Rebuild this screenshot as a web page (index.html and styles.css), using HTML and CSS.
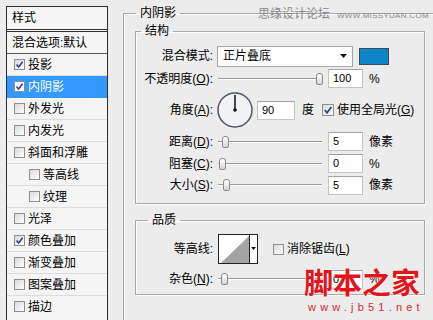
FILE: index.html
```html
<!DOCTYPE html>
<html lang="zh-CN">
<head>
<meta charset="utf-8">
<title>图层样式 - 内阴影</title>
<link rel="stylesheet" href="styles.css">
</head>
<body>
<div class="app">
  <aside class="styles-panel">
    <div class="sp-header">样式</div>
    <div class="sp-row sp-blend">混合选项:默认</div>
    <div class="sp-row"><span class="cb"><svg width="9" height="9" viewBox="0 0 9 9"><polyline points="1.5,4.5 3.6,7 7.6,1.8" fill="none" stroke="#2b3f96" stroke-width="1.6"/></svg></span>投影</div>
    <div class="sp-row selected"><span class="cb"><svg width="9" height="9" viewBox="0 0 9 9"><polyline points="1.5,4.5 3.6,7 7.6,1.8" fill="none" stroke="#2b3f96" stroke-width="1.6"/></svg></span>内阴影</div>
    <div class="sp-row"><span class="cb"></span>外发光</div>
    <div class="sp-row"><span class="cb"></span>内发光</div>
    <div class="sp-row"><span class="cb"></span>斜面和浮雕</div>
    <div class="sp-row sub"><span class="cb"></span>等高线</div>
    <div class="sp-row sub"><span class="cb"></span>纹理</div>
    <div class="sp-row"><span class="cb"></span>光泽</div>
    <div class="sp-row"><span class="cb"><svg width="9" height="9" viewBox="0 0 9 9"><polyline points="1.5,4.5 3.6,7 7.6,1.8" fill="none" stroke="#2b3f96" stroke-width="1.6"/></svg></span>颜色叠加</div>
    <div class="sp-row"><span class="cb"></span>渐变叠加</div>
    <div class="sp-row"><span class="cb"></span>图案叠加</div>
    <div class="sp-row last"><span class="cb"></span>描边</div>
  </aside>

  <main class="main">
    <fieldset class="group outer">
      <legend>内阴影</legend>

      <fieldset class="group struct">
        <legend>结构</legend>
        <div class="form struct-form">
          <div class="lbl">混合模式:</div>
          <div class="ctl">
            <div class="select"><span>正片叠底</span><svg class="arrow" width="7" height="4" viewBox="0 0 7 4"><polygon points="0,0 7,0 3.5,4" fill="#111"/></svg></div>
            <div class="swatch"></div>
          </div>

          <div class="lbl">不透明度(<u>O</u>):</div>
          <div class="ctl">
            <div class="slider"><div class="thumb" style="left:98px"></div></div>
            <div class="num">100</div>
            <span class="unit">%</span>
          </div>

          <div class="lbl">角度(<u>A</u>):</div>
          <div class="ctl">
            <svg class="dial" width="36" height="36" viewBox="0 0 36 36">
              <circle cx="18" cy="18" r="17" fill="#f1f2f5" stroke="#4f5668" stroke-width="1.5"/>
              <line x1="18" y1="18" x2="18" y2="3" stroke="#111" stroke-width="1.5"/>
              <circle cx="18" cy="18" r="1.8" fill="#111"/>
            </svg>
            <div class="num wide">90</div>
            <span class="deg">度</span>
            <span class="cb big"><svg width="10" height="10" viewBox="0 0 10 10"><polyline points="1.8,5 4,7.8 8.4,2" fill="none" stroke="#2b3f96" stroke-width="1.7"/></svg></span>
            <span class="cb-label">使用全局光(<u>G</u>)</span>
          </div>

          <div class="lbl">距离(<u>D</u>):</div>
          <div class="ctl">
            <div class="slider"><div class="thumb" style="left:4px"></div></div>
            <div class="num">5</div>
            <span class="unit">像素</span>
          </div>

          <div class="lbl">阻塞(<u>C</u>):</div>
          <div class="ctl">
            <div class="slider"><div class="thumb" style="left:1px"></div></div>
            <div class="num">0</div>
            <span class="unit">%</span>
          </div>

          <div class="lbl">大小(<u>S</u>):</div>
          <div class="ctl">
            <div class="slider"><div class="thumb" style="left:5px"></div></div>
            <div class="num">5</div>
            <span class="unit">像素</span>
          </div>
        </div>
      </fieldset>

      <fieldset class="group quality">
        <legend>品质</legend>
        <div class="form quality-form">
          <div class="lbl">等高线:</div>
          <div class="ctl">
            <svg class="contour" width="40" height="30" viewBox="0 0 40 30">
              <rect x="0.5" y="0.5" width="39" height="29" fill="#fff" stroke="#222"/>
              <polygon points="3,29 31,2 31,29" fill="#a4a4a4"/>
              <line x1="31.5" y1="0.5" x2="31.5" y2="29.5" stroke="#222"/>
              <polygon points="33,13 38,13 35.5,16" fill="#111"/>
            </svg>
            <span class="cb aa"></span>
            <span class="cb-label">消除锯齿(<u>L</u>)</span>
          </div>

          <div class="lbl">杂色(<u>N</u>):</div>
          <div class="ctl">
            <div class="slider"><div class="thumb" style="left:3px"></div></div>
            <div class="num">0</div>
            <span class="unit">%</span>
          </div>
        </div>
      </fieldset>
    </fieldset>
  </main>

  <div class="wm-top"><span class="cn">思缘设计论坛</span><span class="en">WWW.MISSYUAN.COM</span></div>
  <div class="wm-bottom"><div class="cn">脚本之家</div><div class="url">www.jb51.net</div></div>
</div>
</body>
</html>
```

FILE: styles.css
```css
* { box-sizing: border-box; }
html, body { margin: 0; padding: 0; }
body {
  width: 433px;
  height: 320px;
  overflow: hidden;
  background: #ececec;
  font-family: "Liberation Sans", "Noto Sans CJK SC", sans-serif;
  font-size: 12px;
  line-height: 16px;
  color: #000;
}
u { text-decoration: underline; }

.app {
  position: relative;
  display: flex;
  align-items: flex-start;
  padding: 6px 0 0 6px;
  height: 320px;
  overflow: hidden;
}

/* ---------- left styles list ---------- */
.styles-panel {
  flex: none;
  width: 102px;
  height: 314px;
  border: 1px solid #2e2e2e;
  border-bottom: 0;
  background: #f5f5f5;
  overflow: hidden;
}
.sp-header {
  height: 25px;
  border-bottom: 3px double #2e2e2e;
  padding-left: 5px;
  display: flex;
  align-items: center;
}
.sp-row {
  height: 22px;
  display: flex;
  align-items: center;
  padding-left: 7px;
  border-bottom: 1px solid #dcdcdc;
  white-space: nowrap;
}
.sp-row.last { height: 21px; border-bottom: 0; }
.sp-blend { padding-left: 5px; border-bottom-color: #5a5a5a; }
.sp-row.sub { padding-left: 22px; }
.sp-row.selected { background: #3399ff; color: #fff; border-bottom-color: #3399ff; }
.sp-row.selected .cb { background: #fff; }

.cb {
  flex: none;
  width: 11px;
  height: 11px;
  border: 1px solid #8f8f8f;
  background: linear-gradient(135deg, #dadada, #ffffff);
  margin-right: 3px;
  display: block;
}
.cb svg { display: block; }
.cb.big { width: 12px; height: 12px; margin-left: 8px; }
.cb.aa { margin-left: 15px; }
.cb-label { white-space: nowrap; }

/* ---------- right group boxes ---------- */
.main { flex: none; margin-left: 15px; }

.group {
  margin: 0;
  min-width: 0;
  border: 1px solid #a9a9a9;
  box-shadow: inset 1px 1px 0 #fff, 1px 1px 0 #fff;
}
.group > legend {
  padding: 0 4px;
  line-height: 15px;
  font-size: 12px;
}
.outer {
  width: 310px;
  height: 314px;
  padding: 3px 0 0 11px;
  border-right: 0;
  border-bottom: 0;
}
.outer > legend { margin-left: 1px; }

.struct {
  width: 290px;
  padding: 6px 0 7px 0;
}
.struct > legend { margin-left: 5px; }

.quality {
  width: 290px;
  margin-top: 9px;
  padding: 5px 0 1px 0;
}
.quality > legend { margin-left: 12px; }

.form {
  display: grid;
  grid-template-columns: 77px auto;
  column-gap: 4px;
}
.struct-form { grid-template-rows: 22px 23px 40px 23px 21px 22px; }
.quality-form { grid-template-rows: 32px 28px; }

.lbl {
  display: flex;
  align-items: center;
  justify-content: flex-end;
  white-space: nowrap;
}
.ctl {
  display: flex;
  align-items: center;
  white-space: nowrap;
}

.select {
  width: 136px;
  height: 21px;
  background: #fff;
  border: 1px solid #a7a7a7;
  display: flex;
  align-items: center;
  justify-content: space-between;
  padding: 0 5px 0 5px;
}
.select .arrow { display: block; }
.swatch {
  width: 30px;
  height: 17px;
  margin-left: 6px;
  background: #0d85c8;
  border: 1px solid #3c4a55;
}

.slider {
  position: relative;
  width: 104px;
  height: 12px;
  margin-left: 1px;
  background: linear-gradient(to bottom, transparent 5px, #9c9c9c 5px, #9c9c9c 6px, #ffffff 6px, #ffffff 7px, transparent 7px);
}
.thumb {
  position: absolute;
  top: 0;
  width: 7px;
  height: 12px;
  border: 1px solid #8a8a8a;
  border-radius: 3px 3px 2px 2px;
  background: linear-gradient(#ffffff, #d6d6d6);
}

.num {
  width: 35px;
  height: 19px;
  margin-left: 6px;
  background: #fff;
  border: 1px solid #c4c4c4;
  border-top-color: #a2a2a2;
  padding-left: 4px;
  font-size: 11px;
  line-height: 17px;
}
.num.wide { width: 38px; margin-left: 4px; }
.unit { margin-left: 6px; }
.deg { margin-left: 7px; }

.dial { display: block; flex: none; }
.contour { display: block; flex: none; margin-left: 1px; }

/* ---------- watermarks ---------- */
.wm-top {
  position: absolute;
  left: 258px;
  top: 6px;
  display: flex;
  align-items: baseline;
  gap: 7px;
  color: #8a8a8a;
  white-space: nowrap;
}
.wm-top .cn { font-size: 12px; }
.wm-top .en { font-size: 8px; letter-spacing: 0.3px; }

.wm-bottom {
  position: absolute;
  left: 304px;
  top: 263px;
  color: #e3151c;
  white-space: nowrap;
}
.wm-bottom .cn {
  font-family: "Noto Sans CJK SC", sans-serif;
  font-size: 29px;
  line-height: 36px;
  font-weight: 700;
  text-shadow: 0 0 2px #fff, 0 0 1px #fff;
}
.wm-bottom .url {
  margin-left: 4px;
  font-size: 11px;
  line-height: 16px;
  letter-spacing: 4.2px;
  color: #e0282c;
}
```
